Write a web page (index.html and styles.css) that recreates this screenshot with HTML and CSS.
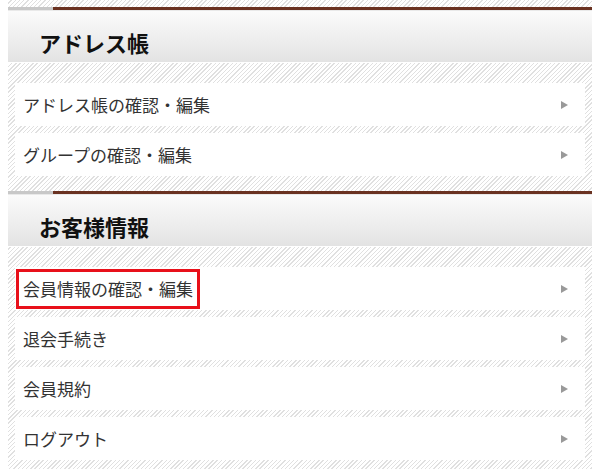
FILE: index.html
```html
<!DOCTYPE html>
<html lang="ja">
<head>
<meta charset="utf-8">
<title>メニュー</title>
<link rel="stylesheet" href="styles.css">
</head>
<body>
<div class="page">
  <section class="sec">
    <div class="bar"><span class="bar-gray"></span><span class="bar-brown"></span></div>
    <h2 class="sec-title">アドレス帳</h2>
    <ul class="list">
      <li class="row"><span class="label">アドレス帳の確認・編集</span><span class="arrow"></span></li>
      <li class="row"><span class="label">グループの確認・編集</span><span class="arrow"></span></li>
    </ul>
  </section>
  <section class="sec">
    <div class="bar"><span class="bar-gray"></span><span class="bar-brown"></span></div>
    <h2 class="sec-title">お客様情報</h2>
    <ul class="list">
      <li class="row"><span class="label hl">会員情報の確認・編集</span><span class="arrow"></span></li>
      <li class="row"><span class="label">退会手続き</span><span class="arrow"></span></li>
      <li class="row"><span class="label">会員規約</span><span class="arrow"></span></li>
      <li class="row"><span class="label">ログアウト</span><span class="arrow"></span></li>
    </ul>
  </section>
</div>
</body>
</html>
```
FILE: styles.css
```css
html, body {
  margin: 0;
  padding: 0;
  background: #fff;
}
body {
  padding: 0 8px;
  font-family: "Noto Sans CJK JP", "Noto Sans", sans-serif;
  color: #333;
}
.page {
  padding-top: 7px;
  height: 462px;
  overflow: hidden;
  background: repeating-linear-gradient(135deg, #fff 0 2px, #e0e0e0 2px 3px);
}
.bar {
  display: flex;
  height: 3px;
}
.bar-gray {
  width: 45px;
  background: #c8c8c8;
}
.bar-brown {
  flex: 1;
  background: #6a3221;
}
.sec-title {
  margin: 0;
  padding: 10px 0 0 31px;
  display: flex;
  align-items: center;
  font-size: 22px;
  font-weight: 700;
  color: #111;
  background: linear-gradient(#fbfbfb, #e3e3e3);
  border-top: 1px solid #e9e9e9;
  border-bottom: 1px solid #fff;
  box-sizing: content-box;
  height: 41px;
}
.list {
  list-style: none;
  margin: 0;
  padding: 20px 7px 8px;
}
.row {
  height: 43px;
  margin-bottom: 7px;
  background: #fff;
  display: flex;
  align-items: center;
  justify-content: space-between;
  padding: 0 17px 0 8px;
  font-size: 17px;
}
.label {
  line-height: 20px;
}
.hl {
  display: inline-block;
  padding: 7px 4px;
  margin: -7px -4px;
  outline: 3px solid #e8101a;
}
.arrow {
  width: 0;
  height: 0;
  border-left: 7px solid #999;
  border-top: 4px solid transparent;
  border-bottom: 4px solid transparent;
}
```
